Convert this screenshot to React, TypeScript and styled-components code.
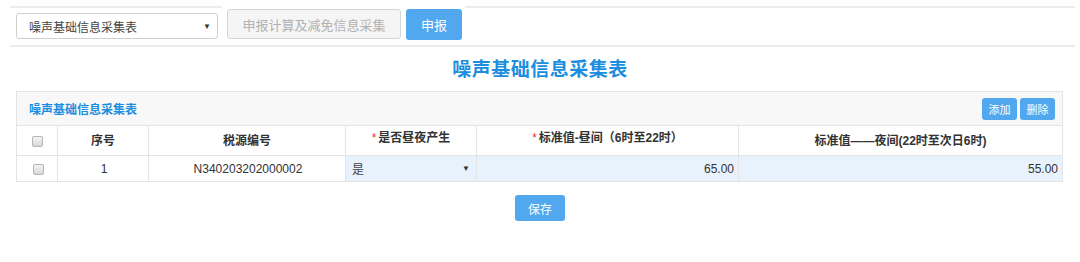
import React from "react";
import styled, { createGlobalStyle } from "styled-components";

const GlobalStyle = createGlobalStyle`
  html, body {
    margin: 0;
    padding: 0;
    background: #fff;
    font-family: "Liberation Sans", "Noto Sans CJK SC", sans-serif;
    font-size: 12px;
    color: #333;
  }
`;

const Page = styled.div`
  width: 1080px;
  height: 262px;
  overflow: hidden;
`;

const Toolbar = styled.div`
  display: flex;
  align-items: flex-start;
  margin: 0 5px 0 10px;
  height: 39px;
  border-bottom: 2px solid #ececec;
  margin-top: 6px;
`;

const LeftGroup = styled.div`
  border-top: 2px solid #ececec;
  padding: 5px 4px 0 6px;
`;

const RightLine = styled.div`
  flex: 1;
  border-top: 2px solid #ececec;
`;

const SelectBox = styled.div`
  position: relative;
  box-sizing: border-box;
  width: 202px;
  height: 26px;
  border: 1px solid #cfcfcf;
  border-radius: 3px;
  padding-left: 12px;
  display: flex;
  align-items: center;
  font-size: 12px;
  color: #444;
`;

const Arrow = styled.span`
  position: absolute;
  right: 6px;
  top: 50%;
  transform: translateY(-50%);
  font-size: 8px;
  color: #333;
`;

const ButtonGroup = styled.div`
  display: flex;
  gap: 5px;
  margin-left: 5px;
  padding-top: 3px;
  padding-right: 3px;
`;

const GreyButton = styled.div`
  box-sizing: border-box;
  width: 174px;
  height: 30px;
  border: 1px solid #d4d4d4;
  border-radius: 3px;
  background: #f5f5f5;
  color: #b2b2b2;
  font-size: 13px;
  display: flex;
  align-items: center;
  justify-content: center;
`;

const BlueButton = styled.div<{ $w: number; $h: number; $fs: number }>`
  box-sizing: border-box;
  width: ${(p) => p.$w}px;
  height: ${(p) => p.$h}px;
  border-radius: 3px;
  background: #52a8ef;
  color: #fff;
  font-size: ${(p) => p.$fs}px;
  display: flex;
  align-items: center;
  justify-content: center;
`;

const Title = styled.h1`
  margin: 11px 0 0;
  text-align: center;
  font-size: 19px;
  letter-spacing: 0.5px;
  font-weight: bold;
  color: #1b8ee0;
  line-height: 24px;
`;

const Panel = styled.div`
  margin: 9px 0 0 16px;
  width: 1047px;
  box-sizing: border-box;
  border: 1px solid #e4e4e4;
`;

const PanelHeader = styled.div`
  height: 33px;
  background: #f8f8f8;
  display: flex;
  align-items: center;
  justify-content: space-between;
  padding: 0 7px 0 12px;
  border-bottom: 1px solid #e4e4e4;
`;

const PanelTitle = styled.span`
  font-size: 12px;
  font-weight: bold;
  color: #1b8ee0;
`;

const HeaderButtons = styled.div`
  display: flex;
  gap: 3px;
`;

const Table = styled.table`
  width: 100%;
  border-collapse: collapse;
  table-layout: fixed;
`;

const Th = styled.th<{ $w?: number; $req?: boolean }>`
  width: ${(p) => (p.$w ? `${p.$w}px` : "auto")};
  height: ${(p) => (p.$req ? "24px" : "29px")};
  font-size: 12px;
  font-weight: bold;
  color: #333;
  line-height: 14px;
  border-right: 1px solid #e4e4e4;
  border-bottom: 1px solid #e4e4e4;
  padding: ${(p) => (p.$req ? "5px 0 0" : "0")};
  vertical-align: ${(p) => (p.$req ? "top" : "middle")};
  text-align: center;
  &:last-child {
    border-right: none;
  }
`;

const Star = styled.span`
  color: #e33;
  margin-right: 2px;
  font-weight: normal;
`;

const Td = styled.td<{ $blue?: boolean; $align?: string }>`
  height: 25px;
  padding: 0 4px 0 6px;
  font-size: 12px;
  color: #333;
  background: ${(p) => (p.$blue ? "#e7f2fd" : "#fff")};
  border-right: 1px solid #e4e4e4;
  text-align: ${(p) => p.$align || "center"};
  &:last-child {
    border-right: none;
  }
`;

const CellSelect = styled.div`
  display: flex;
  justify-content: space-between;
  align-items: center;
  color: #444;
  font-size: 12px;
  padding-right: 2px;
  & > span:last-child {
    font-size: 8px;
    color: #333;
  }
`;

const Check = styled.span`
  display: inline-block;
  width: 9px;
  height: 9px;
  border: 1px solid #b5b5b5;
  border-radius: 2px;
  background: linear-gradient(#f4f4f4, #d8d8d8);
  vertical-align: middle;
`;

const Footer = styled.div`
  display: flex;
  justify-content: center;
  margin-top: 13px;
`;

export default function App() {
  return (
    <Page>
      <GlobalStyle />
      <Toolbar>
        <LeftGroup>
          <SelectBox>
            噪声基础信息采集表
            <Arrow>▼</Arrow>
          </SelectBox>
        </LeftGroup>
        <ButtonGroup>
          <GreyButton>申报计算及减免信息采集</GreyButton>
          <BlueButton $w={56} $h={31} $fs={13}>
            申报
          </BlueButton>
        </ButtonGroup>
        <RightLine />
      </Toolbar>
      <Title>噪声基础信息采集表</Title>
      <Panel>
        <PanelHeader>
          <PanelTitle>噪声基础信息采集表</PanelTitle>
          <HeaderButtons>
            <BlueButton $w={35} $h={22} $fs={11}>
              添加
            </BlueButton>
            <BlueButton $w={35} $h={22} $fs={11}>
              删除
            </BlueButton>
          </HeaderButtons>
        </PanelHeader>
        <Table>
          <thead>
            <tr>
              <Th $w={40}>
                <Check />
              </Th>
              <Th $w={90}>序号</Th>
              <Th $w={196}>税源编号</Th>
              <Th $w={130} $req>
                <Star>*</Star>是否昼夜产生
              </Th>
              <Th $w={261} $req>
                <Star>*</Star>标准值-昼间（6时至22时）
              </Th>
              <Th>标准值——夜间(22时至次日6时)</Th>
            </tr>
          </thead>
          <tbody>
            <tr>
              <Td>
                <Check />
              </Td>
              <Td>1</Td>
              <Td>N340203202000002</Td>
              <Td $blue $align="left">
                <CellSelect>
                  <span>是</span>
                  <span>▼</span>
                </CellSelect>
              </Td>
              <Td $blue $align="right">
                65.00
              </Td>
              <Td $blue $align="right">
                55.00
              </Td>
            </tr>
          </tbody>
        </Table>
      </Panel>
      <Footer>
        <BlueButton $w={50} $h={26} $fs={12}>
          保存
        </BlueButton>
      </Footer>
    </Page>
  );
}
